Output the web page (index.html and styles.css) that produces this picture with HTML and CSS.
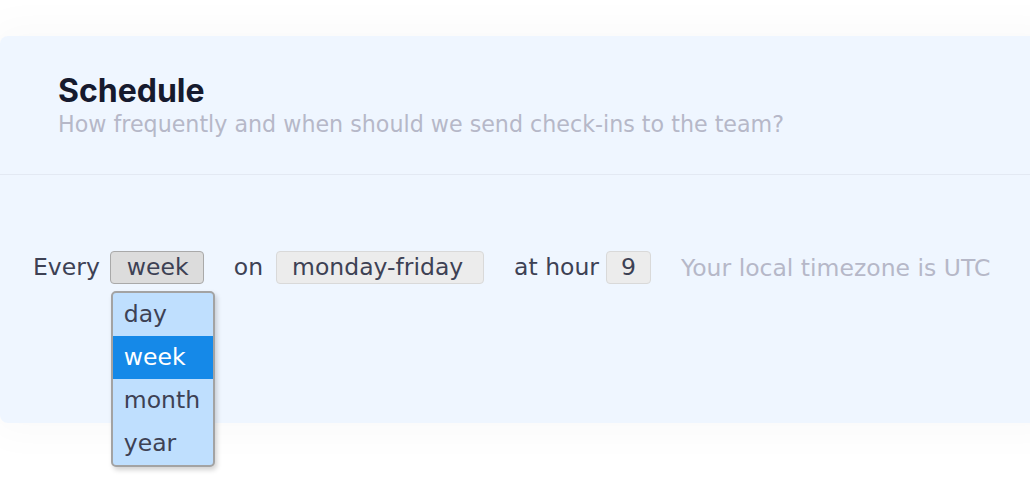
FILE: index.html
```html
<!DOCTYPE html>
<html lang="en">
<head>
<meta charset="utf-8">
<title>Schedule</title>
<link rel="stylesheet" href="styles.css">
</head>
<body>
<div class="page">
  <section class="card">
    <header class="card-header">
      <h1 class="title">Schedule</h1>
      <p class="subtitle">How frequently and when should we send check-ins to the team?</p>
    </header>
    <div class="card-body">
      <div class="row">
        <span class="label">Every</span>
        <div class="select-wrap select-wrap--every">
          <div class="select select--open">week</div>
          <ul class="dropdown">
            <li class="option">day</li>
            <li class="option option--active">week</li>
            <li class="option">month</li>
            <li class="option">year</li>
          </ul>
        </div>
        <span class="label label--on">on</span>
        <div class="select-wrap select-wrap--days">
          <div class="select">monday-friday</div>
        </div>
        <span class="label label--at">at hour</span>
        <div class="select-wrap select-wrap--hour">
          <div class="select">9</div>
        </div>
        <span class="hint">Your local timezone is UTC</span>
      </div>
    </div>
  </section>
</div>
</body>
</html>
```
FILE: styles.css
```css
html, body {
  margin: 0;
  padding: 0;
  background: #ffffff;
  overflow: hidden;
}

body {
  font-family: "DejaVu Sans", "Noto Sans", sans-serif;
  color: #3d4154;
}

.page {
  padding-top: 36px;
  height: 486px;
  box-sizing: border-box;
}

.card {
  background: #eff6ff;
  border-radius: 8px 0 0 8px;
  margin-right: -20px;
  box-shadow: 0 0 40px 12px rgba(0, 0, 0, 0.025);
}

.card-header {
  height: 139px;
  box-sizing: border-box;
  padding: 36px 58px 0;
  border-bottom: 1px solid #e3e9f3;
}

.title {
  margin: 0;
  font-family: Inter, sans-serif;
  font-weight: 700;
  font-size: 32px;
  line-height: 38px;
  color: #161a2e;
}

.subtitle {
  margin: 1px 0 0;
  font-size: 22.2px;
  line-height: 26px;
  color: #b6b8c8;
}

.card-body {
  height: 248px;
  box-sizing: border-box;
  padding: 76px 33px 0;
}

.row {
  display: flex;
  align-items: center;
  height: 33px;
  font-size: 23.5px;
}

.label {
  line-height: 33px;
  white-space: nowrap;
}

.label--on {
  margin-left: 30px;
  margin-right: 13px;
}

.label--at {
  margin-left: 30px;
  margin-right: 7px;
}

.select-wrap {
  position: relative;
  flex: none;
}

.select-wrap--every {
  margin-left: 10px;
}

.select {
  height: 33px;
  box-sizing: border-box;
  line-height: 30px;
  padding: 0 15px;
  background: #ececec;
  border: 1.5px solid #d9d9d9;
  border-radius: 4px;
  color: #3d4154;
  white-space: nowrap;
}

.select--open {
  width: 94px;
  background: #dcdcdc;
  border-color: #a9a9a9;
  padding-left: 16px;
}

.select-wrap--days .select {
  width: 208px;
}

.select-wrap--hour .select {
  width: 45px;
  padding: 0;
  text-align: center;
}

.hint {
  margin-left: 30px;
  color: #b6b8c8;
  white-space: nowrap;
}

.dropdown {
  position: absolute;
  top: 40px;
  left: 1px;
  width: 104px;
  margin: 0;
  padding: 0;
  list-style: none;
  box-sizing: border-box;
  background: #bfdffe;
  border: 2px solid #a3a3a3;
  border-radius: 5px;
  overflow: hidden;
  box-shadow: 2px 3px 5px rgba(0, 0, 0, 0.18);
  z-index: 2;
}

.option {
  height: 43px;
  line-height: 43px;
  padding-left: 11px;
  color: #3d4154;
}

.option--active {
  background: #1589e8;
  color: #ffffff;
}
```
